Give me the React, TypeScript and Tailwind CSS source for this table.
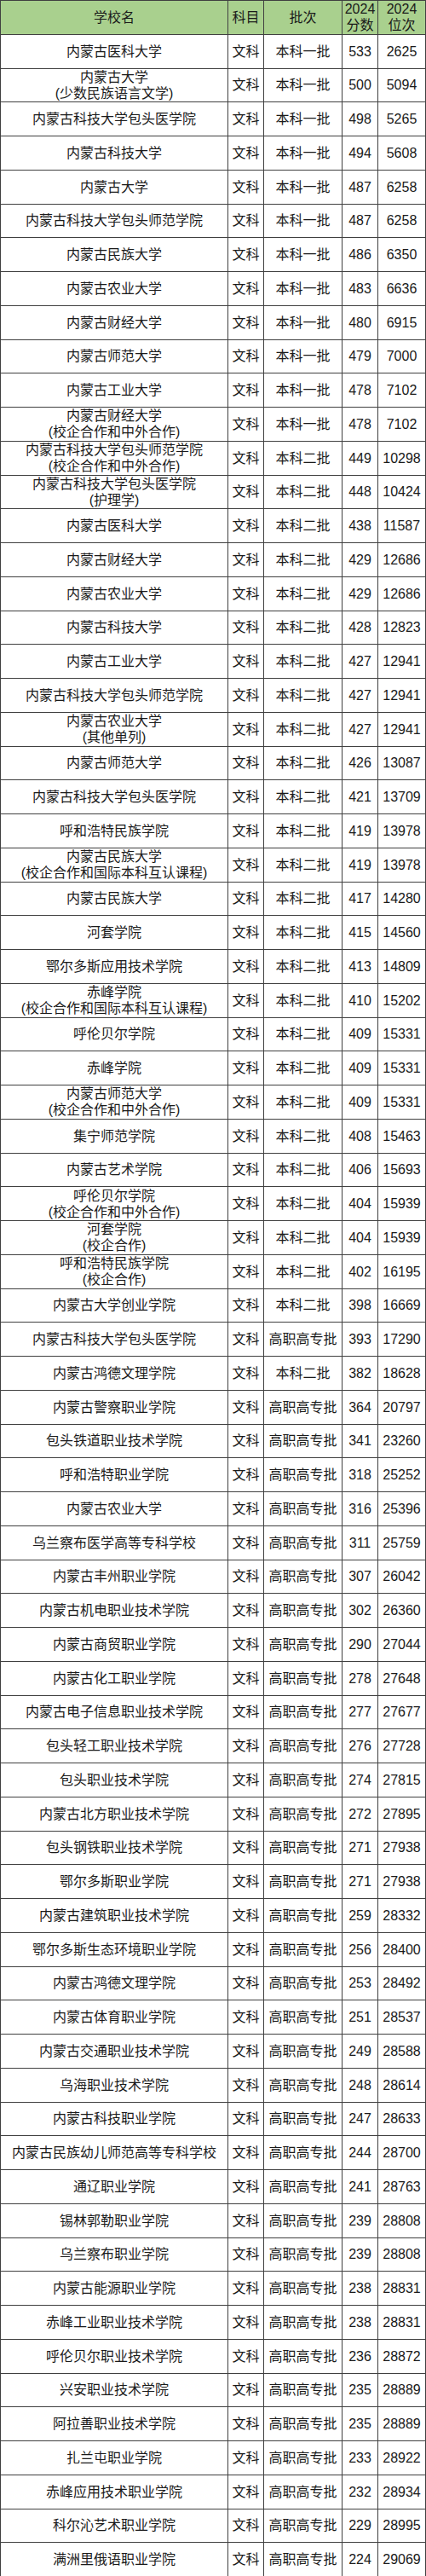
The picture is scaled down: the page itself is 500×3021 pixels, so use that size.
const rows: [string, string, number, number][] = [
  ['内蒙古医科大学', '本科一批', 533, 2625],
  ['内蒙古大学\n(少数民族语言文学)', '本科一批', 500, 5094],
  ['内蒙古科技大学包头医学院', '本科一批', 498, 5265],
  ['内蒙古科技大学', '本科一批', 494, 5608],
  ['内蒙古大学', '本科一批', 487, 6258],
  ['内蒙古科技大学包头师范学院', '本科一批', 487, 6258],
  ['内蒙古民族大学', '本科一批', 486, 6350],
  ['内蒙古农业大学', '本科一批', 483, 6636],
  ['内蒙古财经大学', '本科一批', 480, 6915],
  ['内蒙古师范大学', '本科一批', 479, 7000],
  ['内蒙古工业大学', '本科一批', 478, 7102],
  ['内蒙古财经大学\n(校企合作和中外合作)', '本科一批', 478, 7102],
  ['内蒙古科技大学包头师范学院\n(校企合作和中外合作)', '本科二批', 449, 10298],
  ['内蒙古科技大学包头医学院\n(护理学)', '本科二批', 448, 10424],
  ['内蒙古医科大学', '本科二批', 438, 11587],
  ['内蒙古财经大学', '本科二批', 429, 12686],
  ['内蒙古农业大学', '本科二批', 429, 12686],
  ['内蒙古科技大学', '本科二批', 428, 12823],
  ['内蒙古工业大学', '本科二批', 427, 12941],
  ['内蒙古科技大学包头师范学院', '本科二批', 427, 12941],
  ['内蒙古农业大学\n(其他单列)', '本科二批', 427, 12941],
  ['内蒙古师范大学', '本科二批', 426, 13087],
  ['内蒙古科技大学包头医学院', '本科二批', 421, 13709],
  ['呼和浩特民族学院', '本科二批', 419, 13978],
  ['内蒙古民族大学\n(校企合作和国际本科互认课程)', '本科二批', 419, 13978],
  ['内蒙古民族大学', '本科二批', 417, 14280],
  ['河套学院', '本科二批', 415, 14560],
  ['鄂尔多斯应用技术学院', '本科二批', 413, 14809],
  ['赤峰学院\n(校企合作和国际本科互认课程)', '本科二批', 410, 15202],
  ['呼伦贝尔学院', '本科二批', 409, 15331],
  ['赤峰学院', '本科二批', 409, 15331],
  ['内蒙古师范大学\n(校企合作和中外合作)', '本科二批', 409, 15331],
  ['集宁师范学院', '本科二批', 408, 15463],
  ['内蒙古艺术学院', '本科二批', 406, 15693],
  ['呼伦贝尔学院\n(校企合作和中外合作)', '本科二批', 404, 15939],
  ['河套学院\n(校企合作)', '本科二批', 404, 15939],
  ['呼和浩特民族学院\n(校企合作)', '本科二批', 402, 16195],
  ['内蒙古大学创业学院', '本科二批', 398, 16669],
  ['内蒙古科技大学包头医学院', '高职高专批', 393, 17290],
  ['内蒙古鸿德文理学院', '本科二批', 382, 18628],
  ['内蒙古警察职业学院', '高职高专批', 364, 20797],
  ['包头铁道职业技术学院', '高职高专批', 341, 23260],
  ['呼和浩特职业学院', '高职高专批', 318, 25252],
  ['内蒙古农业大学', '高职高专批', 316, 25396],
  ['乌兰察布医学高等专科学校', '高职高专批', 311, 25759],
  ['内蒙古丰州职业学院', '高职高专批', 307, 26042],
  ['内蒙古机电职业技术学院', '高职高专批', 302, 26360],
  ['内蒙古商贸职业学院', '高职高专批', 290, 27044],
  ['内蒙古化工职业学院', '高职高专批', 278, 27648],
  ['内蒙古电子信息职业技术学院', '高职高专批', 277, 27677],
  ['包头轻工职业技术学院', '高职高专批', 276, 27728],
  ['包头职业技术学院', '高职高专批', 274, 27815],
  ['内蒙古北方职业技术学院', '高职高专批', 272, 27895],
  ['包头钢铁职业技术学院', '高职高专批', 271, 27938],
  ['鄂尔多斯职业学院', '高职高专批', 271, 27938],
  ['内蒙古建筑职业技术学院', '高职高专批', 259, 28332],
  ['鄂尔多斯生态环境职业学院', '高职高专批', 256, 28400],
  ['内蒙古鸿德文理学院', '高职高专批', 253, 28492],
  ['内蒙古体育职业学院', '高职高专批', 251, 28537],
  ['内蒙古交通职业技术学院', '高职高专批', 249, 28588],
  ['乌海职业技术学院', '高职高专批', 248, 28614],
  ['内蒙古科技职业学院', '高职高专批', 247, 28633],
  ['内蒙古民族幼儿师范高等专科学校', '高职高专批', 244, 28700],
  ['通辽职业学院', '高职高专批', 241, 28763],
  ['锡林郭勒职业学院', '高职高专批', 239, 28808],
  ['乌兰察布职业学院', '高职高专批', 239, 28808],
  ['内蒙古能源职业学院', '高职高专批', 238, 28831],
  ['赤峰工业职业技术学院', '高职高专批', 238, 28831],
  ['呼伦贝尔职业技术学院', '高职高专批', 236, 28872],
  ['兴安职业技术学院', '高职高专批', 235, 28889],
  ['阿拉善职业技术学院', '高职高专批', 235, 28889],
  ['扎兰屯职业学院', '高职高专批', 233, 28922],
  ['赤峰应用技术职业学院', '高职高专批', 232, 28934],
  ['科尔沁艺术职业学院', '高职高专批', 229, 28995],
  ['满洲里俄语职业学院', '高职高专批', 224, 29069],
];

const cell = 'flex items-center justify-center text-center border-r border-b border-[#404040] whitespace-pre-line leading-[19px]';

const Row = ({ cells, head }: { cells: (string | number)[]; head?: boolean }) => (
  <div className={`grid grid-cols-[267px_42px_92px_42px_56px] h-[39.75px] ${head ? 'bg-[#a9d08e]' : 'bg-white'}`}>
    {cells.map((c, i) => (
      <div key={i} className={cell}>{c}</div>
    ))}
  </div>
);

export default function App() {
  return (
    <div
      className="w-[500px] border-t border-l border-[#404040] text-[16px] text-[#1a1a1a]"
      style={{ fontFamily: '"Liberation Sans", "Noto Sans CJK SC", sans-serif' }}
    >
      <Row head cells={['学校名', '科目', '批次', '2024\n分数', '2024\n位次']} />
      {rows.map(([name, batch, score, rank], i) => (
        <Row key={i} cells={[name, '文科', batch, score, rank]} />
      ))}
    </div>
  );
}
